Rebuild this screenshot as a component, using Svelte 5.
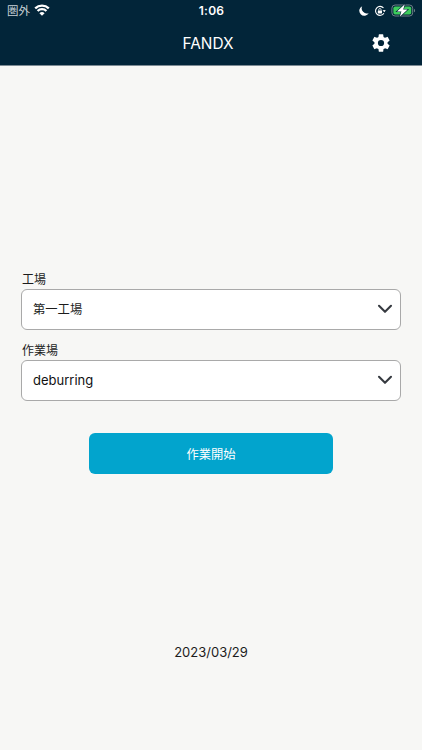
<script>
    let fields = $state([
        { id: 'factory', label: '工場', value: '第一工場' },
        { id: 'workplace', label: '作業場', value: 'deburring' },
    ])
    let date = $state('2023/03/29')
</script>

<div class="screen">
    <header>
        <div class="status-bar">
            <div class="carrier">
                <span>圏外</span>
                <svg class="wifi" viewBox="0 0 16 12" width="16" height="12">
                    <path d="M8 11.8 5.4 9.2a3.7 3.7 0 0 1 5.2 0Z" fill="#fff" />
                    <path d="M3.6 7a6.3 6.3 0 0 1 8.8 0M1.2 4.3a9.8 9.8 0 0 1 13.6 0" fill="none" stroke="#fff" stroke-width="2.3" />
                </svg>
            </div>
            <div class="time">1:06</div>
            <div class="indicators">
                <svg viewBox="0 0 10 10" width="10" height="10">
                    <path d="M3.2.2A5 5 0 1 0 9.8 6.9 5 5 0 0 1 3.2.2Z" fill="#fff" />
                </svg>
                <svg class="lock" viewBox="0 0 12 12" width="12" height="12">
                    <path d="M9.5 3A4.5 4.5 0 1 0 9.9 8.2" fill="none" stroke="#fff" stroke-width="1.1" />
                    <path d="m8.5 5.2 3.2-.2-1.3 2.3Z" fill="#fff" />
                    <rect x="3.8" y="5.5" width="4.2" height="3" rx=".4" fill="#fff" />
                    <path d="M4.7 5.6v-.9a1.2 1.2 0 0 1 2.4 0v.9" fill="none" stroke="#fff" stroke-width=".8" />
                </svg>
                <svg class="battery" viewBox="0 0 25 13" width="25" height="13">
                    <rect x=".9" y="1" width="20.8" height="11" rx="3.2" fill="none" stroke="#6f8089" stroke-width="1" />
                    <rect x="2.4" y="2.5" width="17.8" height="8" rx="1.8" fill="#3ccb5c" />
                    <path d="M23 4.7c1.4.5 1.4 3.1 0 3.6Z" fill="#6f8089" />
                    <path d="M13.8.3 6 7.4h4.4L8.8 12.7l7.8-7.1h-4.4Z" fill="#fff" stroke="#022539" stroke-width="1.2" paint-order="stroke" />
                </svg>
            </div>
        </div>
        <div class="nav">
            <h1>FANDX</h1>
            <button class="settings" aria-label="設定">
                <svg viewBox="0 0 24 24" width="22" height="22">
                    <path fill="#fff" d="M19.14 12.94c.04-.3.06-.61.06-.94s-.02-.64-.07-.94l2.03-1.58a.49.49 0 0 0 .12-.61l-1.92-3.32a.49.49 0 0 0-.59-.22l-2.39.96a7 7 0 0 0-1.62-.94l-.36-2.54a.48.48 0 0 0-.48-.41h-3.84a.47.47 0 0 0-.47.41l-.36 2.54c-.59.24-1.13.57-1.62.94l-2.39-.96a.48.48 0 0 0-.59.22L2.74 8.87a.47.47 0 0 0 .12.61l2.03 1.58c-.05.3-.09.63-.09.94s.02.64.07.94l-2.03 1.58a.49.49 0 0 0-.12.61l1.92 3.32c.12.22.37.29.59.22l2.39-.96c.5.38 1.03.7 1.62.94l.36 2.54c.05.24.24.41.48.41h3.84c.24 0 .44-.17.47-.41l.36-2.54a6.8 6.8 0 0 0 1.62-.94l2.39.96c.22.08.47 0 .59-.22l1.92-3.32a.47.47 0 0 0-.12-.61ZM12 15.4A3.4 3.4 0 1 1 12 8.6a3.4 3.4 0 0 1 0 6.8Z" />
                </svg>
            </button>
        </div>
    </header>

    <main>
        {#each fields as f (f.id)}
            <div class="field">
                <span class="label">{f.label}</span>
                <button class="select">
                    <span class={f.id}>{f.value}</span>
                    <svg class="chevron" viewBox="0 0 16 10" width="16" height="10">
                        <path d="m2 1.8 6 6 6-6" fill="none" stroke="#363a40" stroke-width="2.1" stroke-linecap="round" stroke-linejoin="round" />
                    </svg>
                </button>
            </div>
        {/each}
        <button class="start">作業開始</button>
        <div class="date">{date}</div>
    </main>
</div>

<style>
    :global(body) {
        background: #f7f7f5;
    }

    .screen {
        height: 750px;
        overflow: hidden;
        display: flex;
        flex-direction: column;
        font-family: Inter, "Noto Sans CJK JP", sans-serif;
        color: #1c1c1c;
        background: #f7f7f5;
    }

    button {
        font-family: inherit;
        cursor: pointer;
    }

    svg {
        display: block;
        flex: none;
    }

    header {
        box-sizing: border-box;
        height: 66px;
        background: #022539;
        border-bottom: 1px solid #7d8b94;
        color: #fff;
    }

    .status-bar {
        height: 21px;
        display: grid;
        grid-template-columns: 1fr auto 1fr;
        align-items: center;
        padding: 0 6px 0 7px;
    }

    .carrier {
        display: flex;
        align-items: center;
        gap: 4px;
        font-size: 11.5px;
        line-height: 20px;
        color: #c9d2d7;
    }

    .carrier span {
        padding-top: 1px;
    }

    .wifi {
        margin-bottom: 1px;
    }

    .time {
        font-size: 12px;
        font-weight: 600;
        letter-spacing: 0.3px;
    }

    .indicators {
        display: flex;
        align-items: center;
        justify-content: flex-end;
        gap: 5px;
    }

    .lock {
        margin-top: 1px;
    }

    .nav {
        height: 44px;
        display: grid;
        grid-template-columns: 1fr auto 1fr;
        align-items: center;
        padding: 0 30px 0 27px;
    }

    h1 {
        grid-column: 2;
        margin: 0;
        padding: 1px 3px 0 0;
        font-size: 15.4px;
        font-weight: 400;
        line-height: 20px;
    }

    .settings {
        justify-self: end;
        padding: 0;
        border: none;
        background: none;
    }

    main {
        flex: 1;
        display: flex;
        flex-direction: column;
        padding: 203px 21px 0;
    }

    .field {
        height: 71px;
        flex: none;
    }

    .label {
        display: block;
        box-sizing: border-box;
        padding: 1px 0 0 1px;
        height: 20px;
        font-size: 12px;
        line-height: 19px;
    }

    .select {
        box-sizing: border-box;
        width: 100%;
        height: 41px;
        display: flex;
        align-items: center;
        justify-content: space-between;
        padding: 0 7px 0 11px;
        background: #fff;
        border: 1px solid #a9a9a9;
        border-radius: 6px;
        line-height: 20px;
        color: #1c1c1c;
    }

    .chevron {
        margin-bottom: 2px;
    }

    .factory {
        font-size: 12.3px;
    }

    .workplace {
        margin-bottom: 2px;
        font-size: 13px;
        color: #111;
    }

    .start {
        align-self: center;
        flex: none;
        width: 244px;
        height: 41px;
        margin-top: 22px;
        padding: 0;
        border: none;
        border-radius: 6px;
        background: #02a4cd;
        color: #fff;
        font-size: 12.3px;
    }

    .date {
        margin-top: 168px;
        text-align: center;
        font-size: 13px;
        line-height: 20px;
    }
</style>
